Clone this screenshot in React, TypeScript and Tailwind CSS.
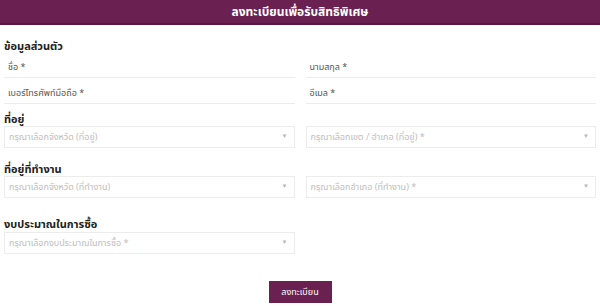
const font = { fontFamily: '"Noto Sans Thai", "Noto Sans", "Liberation Sans", sans-serif' };

function Field({ label }: { label: string }) {
  return (
    <div className="flex h-[26px] items-end border-b border-[#ececec] pb-[5px] pl-[4px]">
      <span className="text-[9px] leading-none text-[#555]">{label}</span>
    </div>
  );
}

function Select({ placeholder }: { placeholder: string }) {
  return (
    <div className="flex h-[22px] items-center justify-between border border-[#ececec] bg-white pl-[4px] pr-[6px]">
      <span className="text-[9px] leading-none text-[#bdbdbd]">{placeholder}</span>
      <span className="text-[6px] leading-none text-[#b5b5b5]">▼</span>
    </div>
  );
}

function Heading({ children }: { children: string }) {
  return <h2 className="text-[11px] font-bold leading-none text-[#222]">{children}</h2>;
}

export default function App() {
  return (
    <div className="h-[306px] w-[600px] bg-white" style={font}>
      {/* header bar */}
      <div className="flex h-[25px] items-center justify-center border-b-2 border-[#5a1845] bg-[#6a2152]">
        <span className="text-[12px] font-bold leading-none text-white">ลงทะเบียนเพื่อรับสิทธิพิเศษ</span>
      </div>

      <div className="px-[4px]">
        {/* personal info */}
        <div className="mt-[16px]">
          <Heading>ข้อมูลส่วนตัว</Heading>
        </div>
        <div className="grid grid-cols-2 gap-x-[11px]">
          <Field label="ชื่อ *" />
          <Field label="นามสกุล *" />
          <Field label="เบอร์โทรศัพท์มือถือ *" />
          <Field label="อีเมล *" />
        </div>

        {/* address */}
        <div className="mt-[10px]">
          <Heading>ที่อยู่</Heading>
        </div>
        <div className="mt-[1px] grid grid-cols-2 gap-x-[11px]">
          <Select placeholder="กรุณาเลือกจังหวัด (ที่อยู่)" />
          <Select placeholder="กรุณาเลือกเขต / อำเภอ (ที่อยู่) *" />
        </div>

        {/* work address */}
        <div className="mt-[16px]">
          <Heading>ที่อยู่ที่ทำงาน</Heading>
        </div>
        <div className="mt-[1px] grid grid-cols-2 gap-x-[11px]">
          <Select placeholder="กรุณาเลือกจังหวัด (ที่ทำงาน)" />
          <Select placeholder="กรุณาเลือกอำเภอ (ที่ทำงาน) *" />
        </div>

        {/* budget */}
        <div className="mt-[21px]">
          <Heading>งบประมาณในการซื้อ</Heading>
        </div>
        <div className="mt-[2px] grid grid-cols-2 gap-x-[11px]">
          <Select placeholder="กรุณาเลือกงบประมาณในการซื้อ *" />
        </div>

        <div className="mt-[27px] flex justify-center">
          <button className="h-[22px] w-[63px] bg-[#6a2152] text-[9px] leading-none text-white">
            ลงทะเบียน
          </button>
        </div>
      </div>
    </div>
  );
}
